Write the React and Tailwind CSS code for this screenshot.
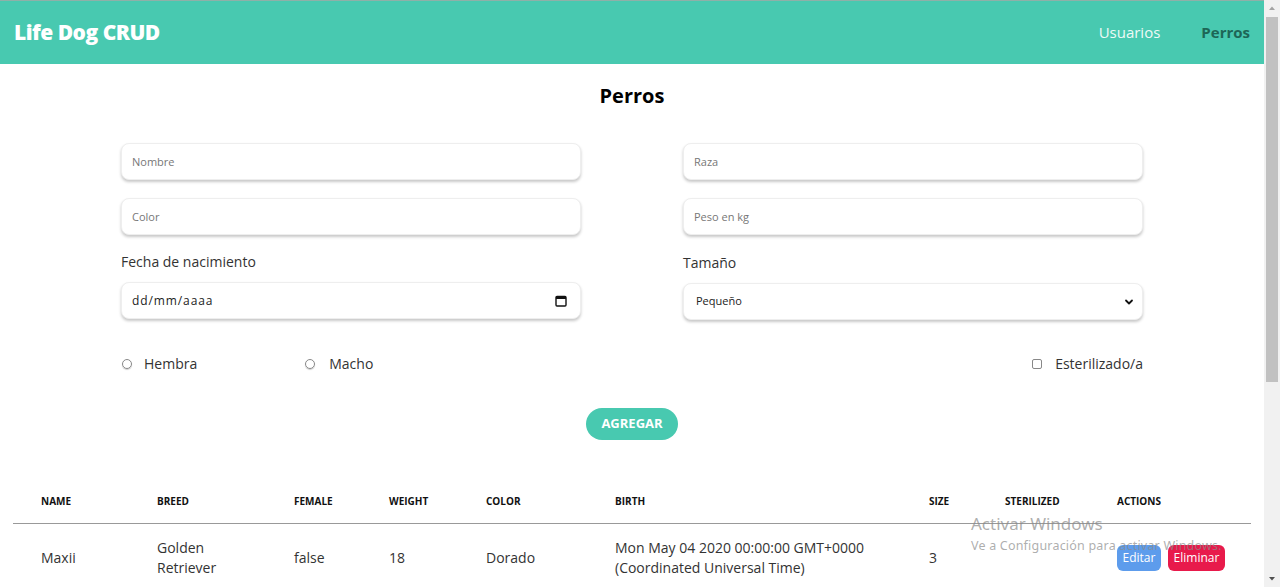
import React from "react";

const font = { fontFamily: '"Open Sans", "Liberation Sans", sans-serif' };

function Field({ placeholder }) {
  return (
    <input
      placeholder={placeholder}
      className="h-[37px] w-full rounded-lg border border-[#eeeeee] bg-white px-[10px] text-[11px] text-[#333] shadow-[0_2px_3px_rgba(0,0,0,0.22)] outline-none placeholder:text-[#777]"
    />
  );
}

function Scrollbar() {
  return (
    <div className="flex h-full w-[16px] shrink-0 flex-col items-center bg-[#f1f1f1]">
      <svg width="16" height="16" viewBox="0 0 16 16" className="shrink-0">
        <path d="M5 10 L8 6.5 L11 10 Z" fill="#a3a3a3" />
      </svg>
      <div className="mt-[1px] h-[365px] w-[12px] bg-[#c1c1c1]" />
      <div className="flex-1" />
      <svg width="16" height="16" viewBox="0 0 16 16" className="shrink-0">
        <path d="M5 6 L8 9.5 L11 6 Z" fill="#505050" />
      </svg>
    </div>
  );
}

export default function App() {
  return (
    <div className="flex h-[587px] overflow-hidden bg-white text-[#222]" style={font}>
      <div className="relative min-w-0 flex-1">
        <header className="flex h-[64px] items-center justify-between border-t border-[#8fb0a8] bg-[#48c9b0] px-[14px]">
          <div className="text-[21px] font-extrabold tracking-[-0.5px] text-white">Life Dog CRUD</div>
          <nav className="flex items-center gap-[41px] text-[15px]">
            <span className="font-medium text-[#eefaf7]">Usuarios</span>
            <span className="font-bold text-[#1d6656]">Perros</span>
          </nav>
        </header>

        <h1 className="mt-[17px] text-center text-[20px] font-bold text-black">Perros</h1>

        <div className="mx-auto mt-[32px] grid w-[1022px] grid-cols-2 gap-x-[102px]">
          <div className="flex flex-col">
            <Field placeholder="Nombre" />
            <div className="mt-[18px]"><Field placeholder="Color" /></div>
            <label className="mt-[17px] text-[14px] leading-[20px] text-[#333]">Fecha de nacimiento</label>
            <div className="mt-[10px] flex h-[37px] items-center justify-between rounded-lg border border-[#eeeeee] bg-white pl-[10px] pr-[13px] text-[12px] text-[#222] shadow-[0_2px_3px_rgba(0,0,0,0.22)]">
              <span className="tracking-[0.9px]">dd/mm/aaaa</span>
              <svg width="12" height="12" viewBox="0 0 12 12" fill="none">
                <rect x="1" y="1.5" width="10" height="9.5" rx="1" stroke="#111" strokeWidth="1.4" />
                <rect x="1" y="1.5" width="10" height="2.5" fill="#111" />
              </svg>
            </div>
          </div>
          <div className="flex flex-col">
            <Field placeholder="Raza" />
            <div className="mt-[18px]"><Field placeholder="Peso en kg" /></div>
            <label className="mt-[18px] text-[14px] leading-[20px] text-[#333]">Tamaño</label>
            <div className="mt-[10px] flex h-[37px] items-center justify-between rounded-lg border border-[#eeeeee] bg-white pl-[12px] pr-[8px] text-[11px] text-[#222] shadow-[0_2px_3px_rgba(0,0,0,0.22)]">
              <span>Pequeño</span>
              <svg width="10" height="10" viewBox="0 0 10 10" fill="none">
                <path d="M2 3.5 L5 6.5 L8 3.5" stroke="#111" strokeWidth="1.8" strokeLinecap="round" strokeLinejoin="round" />
              </svg>
            </div>
          </div>
        </div>

        <div className="mx-auto mt-[33px] flex w-[1022px] items-center text-[14px] text-[#333]">
          <span className="ml-[1px] h-[10px] w-[10px] rounded-full border border-[#888] shadow-[0_1px_1px_rgba(0,0,0,0.2)]" />
          <span className="ml-[12px]">Hembra</span>
          <span className="ml-[108px] h-[10px] w-[10px] rounded-full border border-[#888] shadow-[0_1px_1px_rgba(0,0,0,0.2)]" />
          <span className="ml-[14px]">Macho</span>
          <span className="ml-auto h-[10px] w-[10px] rounded-[2px] border border-[#888]" />
          <span className="ml-[13px]">Esterilizado/a</span>
        </div>

        <div className="mt-[34px] flex justify-center">
          <button className="h-[32px] w-[92px] rounded-full bg-[#48c9b0] text-[13px] font-bold text-white">AGREGAR</button>
        </div>

        <div className="mx-[13px] mt-[40px]">
          <div className="grid h-[44px] grid-cols-[116px_137px_95px_97px_129px_314px_76px_112px_1fr] items-center border-b border-[#999] pl-[28px] text-[10px] font-bold text-[#111]">
            <span>NAME</span>
            <span>BREED</span>
            <span>FEMALE</span>
            <span>WEIGHT</span>
            <span>COLOR</span>
            <span>BIRTH</span>
            <span>SIZE</span>
            <span>STERILIZED</span>
            <span>ACTIONS</span>
          </div>
          <div className="grid h-[68px] grid-cols-[116px_137px_95px_97px_129px_314px_76px_112px_1fr] items-center border-b border-[#ccc] pl-[28px] text-[14px] leading-[20px] text-[#333]">
            <span>Maxii</span>
            <span>Golden<br />Retriever</span>
            <span>false</span>
            <span>18</span>
            <span>Dorado</span>
            <span>Mon May 04 2020 00:00:00 GMT+0000<br />(Coordinated Universal Time)</span>
            <span>3</span>
            <span></span>
            <div className="flex gap-[7px]">
              <button className="h-[26px] w-[44px] rounded-md bg-[#5d9cec] text-[12px] text-white">Editar</button>
              <button className="h-[26px] w-[57px] rounded-md bg-[#e81a4b] text-[12px] text-white">Eliminar</button>
            </div>
          </div>
        </div>

        <div
          className="pointer-events-none absolute left-[971px] top-[513px] text-[#8a8a8a]/70"
          style={{ fontFamily: '"Noto Sans", "Liberation Sans", sans-serif' }}
        >
          <div className="text-[17px] leading-[22px]">Activar Windows</div>
          <div className="mt-[2px] text-[12.5px] leading-[18px] tracking-[0.2px]">Ve a Configuración para activar Windows.</div>
        </div>
      </div>
      <Scrollbar />
    </div>
  );
}
